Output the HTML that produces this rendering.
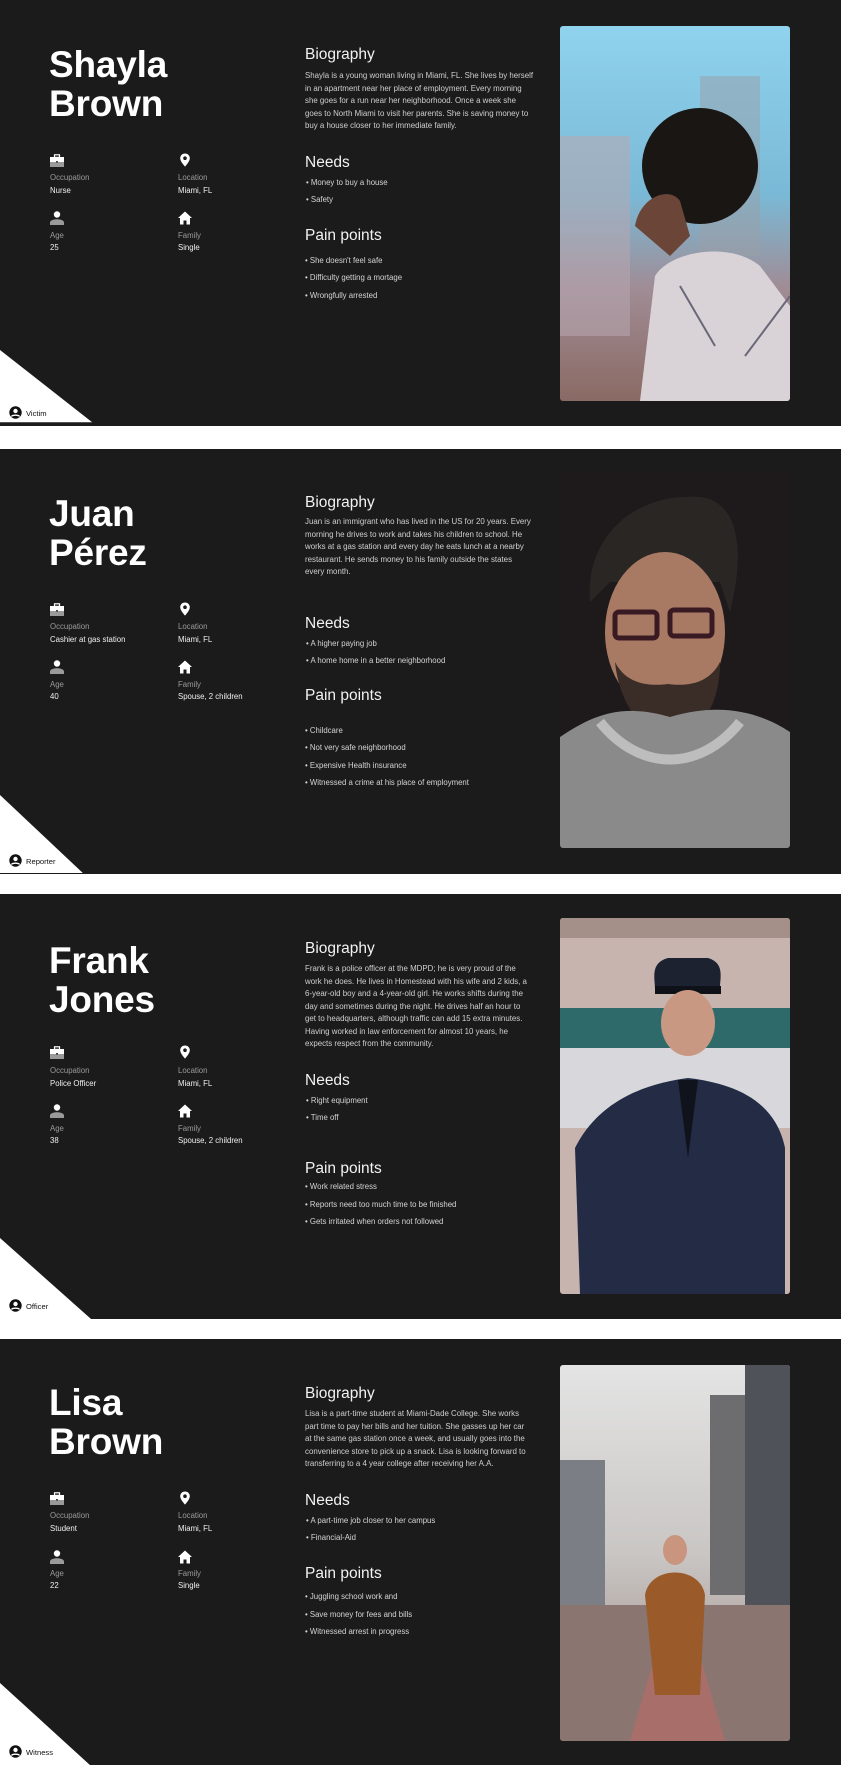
<!DOCTYPE html>
<html><head><meta charset="utf-8"><style>
*{margin:0;padding:0;box-sizing:border-box}
body{width:841px;height:1765px;background:#fff;position:relative;overflow:hidden;font-family:"Liberation Sans",Arial,sans-serif}
.card{position:absolute;left:0;width:841px;height:425px;background:#1b1b1b;overflow:hidden}
.name{position:absolute;left:49px;color:#fff;font-size:37px;font-weight:bold;line-height:39px;letter-spacing:-0.2px}
.h{position:absolute;left:305px;color:#f2f2f2;font-size:15.5px;line-height:18px}
.bio{position:absolute;left:305px;color:#cfcfcf;font-size:7.9px;line-height:12.5px;white-space:nowrap}
.li{position:absolute;left:306px;color:#d4d4d4;font-size:7.8px;line-height:10px;white-space:nowrap}
.lab{position:absolute;color:#9a9a9a;font-size:7.8px;line-height:10px}
.val{position:absolute;color:#f0f0f0;font-size:7.8px;line-height:10px;white-space:nowrap}
.ic{position:absolute;width:14px;height:14px}
.tri{position:absolute;left:0;bottom:0;width:100px;height:80px}
.role{position:absolute;left:9px;bottom:6px;display:flex;align-items:center;gap:4px;font-size:7.6px;color:#111}
.photo{position:absolute;left:560px;width:230px;height:376px;border-radius:3px;overflow:hidden}
</style></head><body>

<!-- CARD 1 -->
<div class="card" style="top:0;height:426px">
  <div class="name" style="top:45px">Shayla<br>Brown</div>
  <svg class="ic" style="left:50px;top:154px" viewBox="0 0 14 14"><rect x="0" y="3" width="14" height="10" fill="#fff"/><rect x="0" y="8" width="14" height="5" fill="#9a9a9a"/><rect x="4.5" y="0.8" width="5" height="2.6" fill="none" stroke="#fff" stroke-width="1.2"/><rect x="6.2" y="7" width="1.6" height="1.6" fill="#1b1b1b"/></svg>
  <div class="lab" style="left:50px;top:173px">Occupation</div><div class="val" style="left:50px;top:186px">Nurse</div>
  <svg class="ic" style="left:178px;top:153px" viewBox="0 0 14 14"><path d="M7 0.5C4.2 0.5 2.2 2.6 2.2 5.2C2.2 8.5 7 13.5 7 13.5S11.8 8.5 11.8 5.2C11.8 2.6 9.8 0.5 7 0.5Z" fill="#fff"/><circle cx="7" cy="5.2" r="1.8" fill="#1b1b1b"/></svg>
  <div class="lab" style="left:178px;top:173px">Location</div><div class="val" style="left:178px;top:186px">Miami, FL</div>
  <svg class="ic" style="left:50px;top:211px" viewBox="0 0 14 14"><circle cx="7" cy="3.5" r="3.2" fill="#fff"/><path d="M0 14V11.5C0 9.5 3.5 8.3 7 8.3S14 9.5 14 11.5V14Z" fill="#9a9a9a"/></svg>
  <div class="lab" style="left:50px;top:231px">Age</div><div class="val" style="left:50px;top:243px">25</div>
  <svg class="ic" style="left:178px;top:211px" viewBox="0 0 14 14"><path d="M7 0.5L0 7H2V13.5H5.5V9.5H8.5V13.5H12V7H14Z" fill="#fff"/></svg>
  <div class="lab" style="left:178px;top:231px">Family</div><div class="val" style="left:178px;top:243px">Single</div>

  <div class="h" style="top:46px">Biography</div>
  <div class="bio" style="top:70px">Shayla is a young woman living in Miami, FL. She lives by herself<br>in an apartment near her place of employment. Every morning<br>she goes for a run near her neighborhood. Once a week she<br>goes to North Miami to visit her parents. She is saving money to<br>buy a house closer to her immediate family.</div>
  <div class="h" style="top:154px">Needs</div>
  <div class="li" style="top:178px">• Money to buy a house</div>
  <div class="li" style="top:195px">• Safety</div>
  <div class="h" style="top:227px">Pain points</div>
  <div class="li" style="top:256px;left:305px">• She doesn't feel safe</div>
  <div class="li" style="top:273px;left:305px">• Difficulty getting a mortage</div>
  <div class="li" style="top:291px;left:305px">• Wrongfully arrested</div>

  <div class="photo" style="top:26px;height:375px">
    <svg width="230" height="375" viewBox="0 0 230 375">
      <defs><linearGradient id="g1" x1="0" y1="0" x2="0" y2="1"><stop offset="0" stop-color="#8fd3ee"/><stop offset="0.45" stop-color="#7ab9d6"/><stop offset="0.7" stop-color="#a08c95"/><stop offset="1" stop-color="#8a6a64"/></linearGradient></defs>
      <rect width="230" height="375" fill="url(#g1)"/>
      <rect x="0" y="110" width="70" height="200" fill="#b8a8b0" opacity=".55"/>
      <rect x="140" y="50" width="60" height="180" fill="#9aa0a8" opacity=".5"/>
      <circle cx="140" cy="140" r="58" fill="#1a1614"/>
      <path d="M75 200C80 170 110 160 120 175L130 210L110 230Z" fill="#6b4638"/>
      <path d="M95 250C110 225 170 215 200 240L230 280V375H80Z" fill="#d9d3d8"/>
      <path d="M120 260L155 320M230 270L185 330" stroke="#6a6878" stroke-width="2" fill="none"/>
    </svg>
  </div>
  <svg class="tri" viewBox="0 0 100 80" preserveAspectRatio="none" style="height:76px;width:96px"><polygon points="0,0 96,76 0,76" fill="#fff"/></svg>
  <div class="role"><svg width="13" height="14" viewBox="0 0 13 14"><circle cx="6.5" cy="6.5" r="6.2" fill="#111"/><circle cx="6.5" cy="5" r="2.2" fill="#fff"/><path d="M2.5 10.5C3.5 8.8 9.5 8.8 10.5 10.5" stroke="#fff" stroke-width="1.4" fill="none"/></svg>Victim</div>
</div>

<!-- CARD 2 -->
<div class="card" style="top:449px">
  <div class="name" style="top:45px">Juan<br>Pérez</div>
  <svg class="ic" style="left:50px;top:154px" viewBox="0 0 14 14"><rect x="0" y="3" width="14" height="10" fill="#fff"/><rect x="0" y="8" width="14" height="5" fill="#9a9a9a"/><rect x="4.5" y="0.8" width="5" height="2.6" fill="none" stroke="#fff" stroke-width="1.2"/><rect x="6.2" y="7" width="1.6" height="1.6" fill="#1b1b1b"/></svg>
  <div class="lab" style="left:50px;top:173px">Occupation</div><div class="val" style="left:50px;top:186px">Cashier at gas station</div>
  <svg class="ic" style="left:178px;top:153px" viewBox="0 0 14 14"><path d="M7 0.5C4.2 0.5 2.2 2.6 2.2 5.2C2.2 8.5 7 13.5 7 13.5S11.8 8.5 11.8 5.2C11.8 2.6 9.8 0.5 7 0.5Z" fill="#fff"/><circle cx="7" cy="5.2" r="1.8" fill="#1b1b1b"/></svg>
  <div class="lab" style="left:178px;top:173px">Location</div><div class="val" style="left:178px;top:186px">Miami, FL</div>
  <svg class="ic" style="left:50px;top:211px" viewBox="0 0 14 14"><circle cx="7" cy="3.5" r="3.2" fill="#fff"/><path d="M0 14V11.5C0 9.5 3.5 8.3 7 8.3S14 9.5 14 11.5V14Z" fill="#9a9a9a"/></svg>
  <div class="lab" style="left:50px;top:231px">Age</div><div class="val" style="left:50px;top:243px">40</div>
  <svg class="ic" style="left:178px;top:211px" viewBox="0 0 14 14"><path d="M7 0.5L0 7H2V13.5H5.5V9.5H8.5V13.5H12V7H14Z" fill="#fff"/></svg>
  <div class="lab" style="left:178px;top:231px">Family</div><div class="val" style="left:178px;top:243px">Spouse, 2 children</div>

  <div class="h" style="top:45px">Biography</div>
  <div class="bio" style="top:67px">Juan is an immigrant who has lived in the US for 20 years. Every<br>morning he drives to work and takes his children to school. He<br>works at a gas station and every day he eats lunch at a nearby<br>restaurant. He sends money to his family outside the states<br>every month.</div>
  <div class="h" style="top:166px">Needs</div>
  <div class="li" style="top:190px">• A higher paying job</div>
  <div class="li" style="top:207px">• A home home in a better neighborhood</div>
  <div class="h" style="top:238px">Pain points</div>
  <div class="li" style="top:277px;left:305px">• Childcare</div>
  <div class="li" style="top:294px;left:305px">• Not very safe neighborhood</div>
  <div class="li" style="top:312px;left:305px">• Expensive Health insurance</div>
  <div class="li" style="top:329px;left:305px">• Witnessed a crime at his place of employment</div>

  <div class="photo" style="top:23px">
    <svg width="230" height="376" viewBox="0 0 230 376">
      <rect width="230" height="376" fill="#1e1a1c"/>
      <path d="M30 130C25 60 80 20 140 25C180 30 185 80 170 140L160 110H50Z" fill="#2a2624"/>
      <ellipse cx="105" cy="160" rx="60" ry="80" fill="#a87a64"/>
      <path d="M55 190C60 240 90 265 110 265C135 265 160 240 160 190C150 210 130 215 108 212C85 215 65 210 55 190Z" fill="#3a2c26"/>
      <rect x="55" y="140" width="42" height="26" rx="4" fill="none" stroke="#3a1a22" stroke-width="5"/>
      <rect x="110" y="138" width="42" height="26" rx="4" fill="none" stroke="#3a1a22" stroke-width="5"/>
      <path d="M0 265C30 245 60 230 110 245C160 230 200 240 230 260V376H0Z" fill="#8a8a8a"/>
      <path d="M40 250C80 300 140 300 180 250" stroke="#bdbdbd" stroke-width="10" fill="none"/>
    </svg>
  </div>
  <svg class="tri" viewBox="0 0 100 80" preserveAspectRatio="none" style="height:79px;width:91px"><polygon points="0,0 91,79 0,79" fill="#fff"/></svg>
  <div class="role"><svg width="13" height="14" viewBox="0 0 13 14"><circle cx="6.5" cy="6.5" r="6.2" fill="#111"/><circle cx="6.5" cy="5" r="2.2" fill="#fff"/><path d="M2.5 10.5C3.5 8.8 9.5 8.8 10.5 10.5" stroke="#fff" stroke-width="1.4" fill="none"/></svg>Reporter</div>
</div>

<!-- CARD 3 -->
<div class="card" style="top:894px">
  <div class="name" style="top:47px">Frank<br>Jones</div>
  <svg class="ic" style="left:50px;top:152px" viewBox="0 0 14 14"><rect x="0" y="3" width="14" height="10" fill="#fff"/><rect x="0" y="8" width="14" height="5" fill="#9a9a9a"/><rect x="4.5" y="0.8" width="5" height="2.6" fill="none" stroke="#fff" stroke-width="1.2"/><rect x="6.2" y="7" width="1.6" height="1.6" fill="#1b1b1b"/></svg>
  <div class="lab" style="left:50px;top:172px">Occupation</div><div class="val" style="left:50px;top:185px">Police Officer</div>
  <svg class="ic" style="left:178px;top:151px" viewBox="0 0 14 14"><path d="M7 0.5C4.2 0.5 2.2 2.6 2.2 5.2C2.2 8.5 7 13.5 7 13.5S11.8 8.5 11.8 5.2C11.8 2.6 9.8 0.5 7 0.5Z" fill="#fff"/><circle cx="7" cy="5.2" r="1.8" fill="#1b1b1b"/></svg>
  <div class="lab" style="left:178px;top:172px">Location</div><div class="val" style="left:178px;top:185px">Miami, FL</div>
  <svg class="ic" style="left:50px;top:210px" viewBox="0 0 14 14"><circle cx="7" cy="3.5" r="3.2" fill="#fff"/><path d="M0 14V11.5C0 9.5 3.5 8.3 7 8.3S14 9.5 14 11.5V14Z" fill="#9a9a9a"/></svg>
  <div class="lab" style="left:50px;top:230px">Age</div><div class="val" style="left:50px;top:242px">38</div>
  <svg class="ic" style="left:178px;top:210px" viewBox="0 0 14 14"><path d="M7 0.5L0 7H2V13.5H5.5V9.5H8.5V13.5H12V7H14Z" fill="#fff"/></svg>
  <div class="lab" style="left:178px;top:230px">Family</div><div class="val" style="left:178px;top:242px">Spouse, 2 children</div>

  <div class="h" style="top:46px">Biography</div>
  <div class="bio" style="top:69px">Frank is a police officer at the MDPD; he is very proud of the<br>work he does. He lives in Homestead with his  wife and 2 kids, a<br>6-year-old boy and a 4-year-old girl. He works shifts during the<br>day and sometimes during the night.  He drives half an hour to<br>get to headquarters, although traffic can add 15 extra minutes.<br>Having worked in law enforcement for almost 10 years, he<br>expects respect from the community.</div>
  <div class="h" style="top:178px">Needs</div>
  <div class="li" style="top:202px">• Right equipment</div>
  <div class="li" style="top:219px">• Time off</div>
  <div class="h" style="top:266px">Pain points</div>
  <div class="li" style="top:288px;left:305px">• Work related stress</div>
  <div class="li" style="top:306px;left:305px">• Reports need too much time to be finished</div>
  <div class="li" style="top:323px;left:305px">• Gets irritated when orders not followed</div>

  <div class="photo" style="top:24px">
    <svg width="230" height="376" viewBox="0 0 230 376">
      <rect width="230" height="376" fill="#c8b4ae"/>
      <rect x="0" y="90" width="230" height="40" fill="#2f6a6a"/>
      <rect x="0" y="130" width="230" height="80" fill="#d8d8dc"/>
      <rect x="0" y="0" width="230" height="20" fill="#a49088"/>
      <path d="M108 40C90 45 95 60 95 70H160C160 60 165 45 148 40Z" fill="#1d2230"/>
      <rect x="95" y="68" width="66" height="8" fill="#0e1118"/>
      <ellipse cx="128" cy="105" rx="27" ry="33" fill="#c99883"/>
      <path d="M20 376L15 230C40 180 90 165 128 160C170 165 215 180 225 230V376Z" fill="#232b45"/>
      <path d="M118 162L128 240L138 162Z" fill="#10131c"/>
    </svg>
  </div>
  <svg class="tri" viewBox="0 0 100 80" preserveAspectRatio="none" style="height:81px;width:96px"><polygon points="0,0 96,81 0,81" fill="#fff"/></svg>
  <div class="role"><svg width="13" height="14" viewBox="0 0 13 14"><circle cx="6.5" cy="6.5" r="6.2" fill="#111"/><circle cx="6.5" cy="5" r="2.2" fill="#fff"/><path d="M2.5 10.5C3.5 8.8 9.5 8.8 10.5 10.5" stroke="#fff" stroke-width="1.4" fill="none"/></svg>Officer</div>
</div>

<!-- CARD 4 -->
<div class="card" style="top:1339px;height:426px">
  <div class="name" style="top:44px">Lisa<br>Brown</div>
  <svg class="ic" style="left:50px;top:153px" viewBox="0 0 14 14"><rect x="0" y="3" width="14" height="10" fill="#fff"/><rect x="0" y="8" width="14" height="5" fill="#9a9a9a"/><rect x="4.5" y="0.8" width="5" height="2.6" fill="none" stroke="#fff" stroke-width="1.2"/><rect x="6.2" y="7" width="1.6" height="1.6" fill="#1b1b1b"/></svg>
  <div class="lab" style="left:50px;top:172px">Occupation</div><div class="val" style="left:50px;top:185px">Student</div>
  <svg class="ic" style="left:178px;top:152px" viewBox="0 0 14 14"><path d="M7 0.5C4.2 0.5 2.2 2.6 2.2 5.2C2.2 8.5 7 13.5 7 13.5S11.8 8.5 11.8 5.2C11.8 2.6 9.8 0.5 7 0.5Z" fill="#fff"/><circle cx="7" cy="5.2" r="1.8" fill="#1b1b1b"/></svg>
  <div class="lab" style="left:178px;top:172px">Location</div><div class="val" style="left:178px;top:185px">Miami, FL</div>
  <svg class="ic" style="left:50px;top:211px" viewBox="0 0 14 14"><circle cx="7" cy="3.5" r="3.2" fill="#fff"/><path d="M0 14V11.5C0 9.5 3.5 8.3 7 8.3S14 9.5 14 11.5V14Z" fill="#9a9a9a"/></svg>
  <div class="lab" style="left:50px;top:230px">Age</div><div class="val" style="left:50px;top:242px">22</div>
  <svg class="ic" style="left:178px;top:211px" viewBox="0 0 14 14"><path d="M7 0.5L0 7H2V13.5H5.5V9.5H8.5V13.5H12V7H14Z" fill="#fff"/></svg>
  <div class="lab" style="left:178px;top:230px">Family</div><div class="val" style="left:178px;top:242px">Single</div>

  <div class="h" style="top:46px">Biography</div>
  <div class="bio" style="top:69px">Lisa is a part-time student at Miami-Dade College. She works<br>part time to pay her bills and her tuition. She gasses up her car<br>at the same gas station once a week, and usually goes into the<br>convenience store to pick up a snack.  Lisa is looking forward to<br>transferring to a 4 year college after receiving her A.A.</div>
  <div class="h" style="top:153px">Needs</div>
  <div class="li" style="top:177px">• A part-time job closer to her campus</div>
  <div class="li" style="top:194px">• Financial-Aid</div>
  <div class="h" style="top:226px">Pain points</div>
  <div class="li" style="top:253px;left:305px">• Juggling school work and</div>
  <div class="li" style="top:271px;left:305px">• Save money for fees and bills</div>
  <div class="li" style="top:288px;left:305px">• Witnessed arrest in progress</div>

  <div class="photo" style="top:26px">
    <svg width="230" height="376" viewBox="0 0 230 376">
      <defs><linearGradient id="g4" x1="0" y1="0" x2="0" y2="1"><stop offset="0" stop-color="#e4e4e4"/><stop offset="0.5" stop-color="#c9c6c4"/><stop offset="1" stop-color="#9a8680"/></linearGradient></defs>
      <rect width="230" height="376" fill="url(#g4)"/>
      <rect x="0" y="95" width="45" height="150" fill="#7b7e84"/>
      <rect x="150" y="30" width="35" height="200" fill="#6d6d70"/>
      <rect x="185" y="0" width="45" height="240" fill="#4f5258"/>
      <rect x="0" y="240" width="230" height="136" fill="#8a7570"/>
      <path d="M70 376L110 240H125L165 376Z" fill="#a86f6a"/>
      <ellipse cx="115" cy="185" rx="12" ry="15" fill="#c9957f"/>
      <path d="M85 230C90 200 140 200 145 230L140 330H95Z" fill="#9a5a2a"/>
    </svg>
  </div>
  <svg class="tri" viewBox="0 0 100 80" preserveAspectRatio="none" style="height:82px;width:96px"><polygon points="0,0 96,82 0,82" fill="#fff"/></svg>
  <div class="role"><svg width="13" height="14" viewBox="0 0 13 14"><circle cx="6.5" cy="6.5" r="6.2" fill="#111"/><circle cx="6.5" cy="5" r="2.2" fill="#fff"/><path d="M2.5 10.5C3.5 8.8 9.5 8.8 10.5 10.5" stroke="#fff" stroke-width="1.4" fill="none"/></svg>Witness</div>
</div>
</body></html>
